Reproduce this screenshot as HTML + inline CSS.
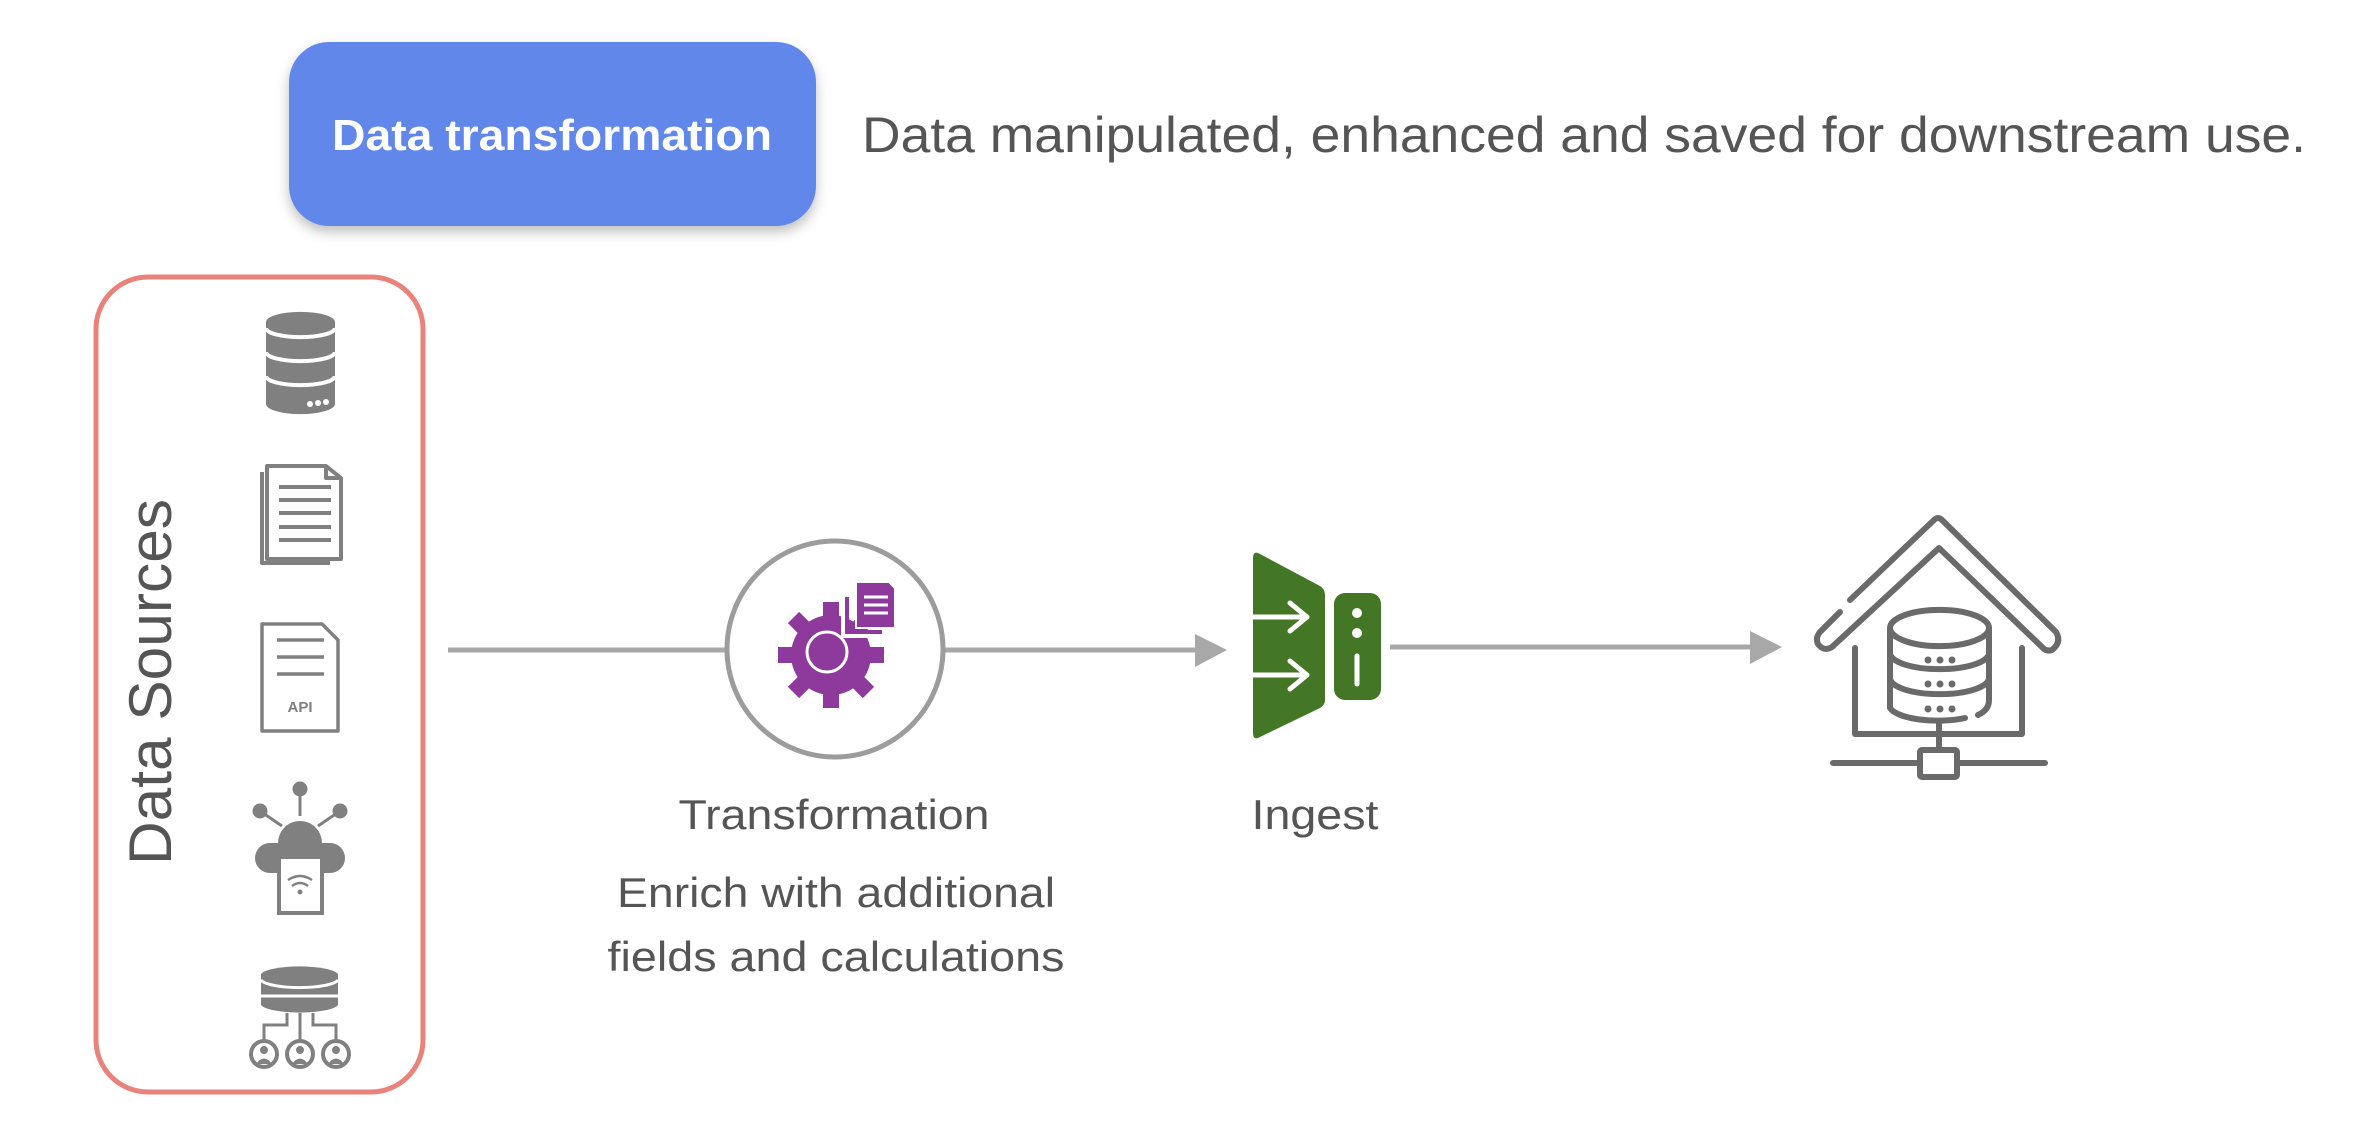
<!DOCTYPE html>
<html><head><meta charset="utf-8"><style>
html,body{margin:0;padding:0;background:#fff;width:2364px;height:1122px;overflow:hidden}
svg{display:block}
text{font-family:"Liberation Sans",Arial,sans-serif}
</style></head><body>
<svg width="2364" height="1122" viewBox="0 0 2364 1122" xmlns="http://www.w3.org/2000/svg">
<defs>
<filter id="sh" x="-10%" y="-10%" width="120%" height="130%"><feDropShadow dx="0" dy="6" stdDeviation="6" flood-color="#000" flood-opacity="0.25"/></filter>
</defs>
<rect x="289" y="42" width="527" height="184" rx="40" fill="#6287ea" filter="url(#sh)"/>
<text x="552" y="150" font-size="44" font-weight="bold" fill="#fff" text-anchor="middle" textLength="440" lengthAdjust="spacingAndGlyphs">Data transformation</text>
<text x="862" y="152" font-size="50" fill="#555" textLength="1444" lengthAdjust="spacingAndGlyphs">Data manipulated, enhanced and saved for downstream use.</text>

<rect x="96" y="277" width="327" height="815" rx="52" fill="none" stroke="#e8827a" stroke-width="5"/>
<text transform="translate(171,682) rotate(-90)" font-size="60" fill="#555" text-anchor="middle" textLength="366" lengthAdjust="spacingAndGlyphs">Data Sources</text>

<g fill="#808080">
<path d="M266 322 A34 10 0 0 1 335 322 L335 404 A34 10 0 0 1 266 404 Z"/>
</g>
<g fill="none" stroke="#fff" stroke-width="4">
<path d="M266 328 A34 9 0 0 0 335 328"/>
<path d="M266 352 A34 9 0 0 0 335 352"/>
<path d="M266 376 A34 9 0 0 0 335 376"/>
</g>
<g fill="#fff"><circle cx="310" cy="404" r="3"/><circle cx="318" cy="403" r="3"/><circle cx="326" cy="402" r="3"/></g>

<g fill="none" stroke="#808080" stroke-width="4" stroke-linejoin="round">
<path d="M262 472 L262 563 L330 563"/>
<path d="M267 466 L267 559 L341 559 L341 478 L326 466 Z"/>
<path d="M326 466 L326 478 L341 478"/>
</g>
<g stroke="#808080" stroke-width="4"><line x1="279" y1="487" x2="331" y2="487"/><line x1="279" y1="500" x2="331" y2="500"/><line x1="279" y1="513" x2="331" y2="513"/><line x1="279" y1="527" x2="331" y2="527"/><line x1="279" y1="540" x2="331" y2="540"/></g>

<path d="M262 624 L262 731 L338 731 L338 640 L322 624 Z" fill="none" stroke="#808080" stroke-width="3.5" stroke-linejoin="round"/>
<g stroke="#808080" stroke-width="3.5"><line x1="277" y1="640" x2="324" y2="640"/><line x1="277" y1="657" x2="324" y2="657"/><line x1="277" y1="674" x2="324" y2="674"/></g>
<text x="300" y="712" font-size="15" font-weight="bold" fill="#808080" text-anchor="middle">API</text>

<g fill="#808080" stroke="#808080" stroke-width="3">
<circle cx="260" cy="811" r="6"/><circle cx="300" cy="789" r="6"/><circle cx="340" cy="811" r="6"/>
<line x1="260" y1="811" x2="282" y2="826"/><line x1="300" y1="789" x2="300" y2="816"/><line x1="340" y1="811" x2="318" y2="826"/>
</g>
<g fill="#808080">
<circle cx="300" cy="843" r="22"/><circle cx="270" cy="858" r="15"/><circle cx="330" cy="858" r="15"/><rect x="270" y="843" width="60" height="30"/>
</g>
<rect x="279" y="857" width="43" height="56" fill="#fff" stroke="#808080" stroke-width="4"/>
<g fill="none" stroke="#808080" stroke-width="2.5"><path d="M288 880 Q300 872 312 880"/><path d="M292 886 Q300 880 308 886"/></g>
<circle cx="300" cy="892" r="2.5" fill="#808080"/>

<path d="M261 974 A39 9 0 0 1 338 974 L338 1005 A39 9 0 0 1 261 1005 Z" fill="#808080"/>
<path d="M261 980 A39 9 0 0 0 338 980" fill="none" stroke="#fff" stroke-width="3"/>
<path d="M261 996 L338 996" stroke="#fff" stroke-width="3"/>
<g fill="none" stroke="#808080" stroke-width="3"><path d="M300 1013 L300 1040"/><path d="M287 1013 L287 1025 L264 1025 L264 1040"/><path d="M313 1013 L313 1025 L336 1025 L336 1040"/></g>
<g fill="#fff" stroke="#808080" stroke-width="4"><circle cx="264" cy="1054" r="13"/><circle cx="300" cy="1054" r="13"/><circle cx="336" cy="1054" r="13"/></g>
<g fill="#808080"><circle cx="264" cy="1050" r="4"/><circle cx="300" cy="1050" r="4"/><circle cx="336" cy="1050" r="4"/><path d="M256 1064 Q264 1053 272 1064Z"/><path d="M292 1064 Q300 1053 308 1064Z"/><path d="M328 1064 Q336 1053 344 1064Z"/></g>

<g stroke="#a8a8a8" stroke-width="5">
<line x1="448" y1="650" x2="728" y2="650"/>
<line x1="944" y1="650" x2="1198" y2="650"/>
<line x1="1390" y1="647" x2="1752" y2="647"/>
</g>
<path d="M1195 634 L1227 650 L1195 667 Z" fill="#a8a8a8"/>
<path d="M1750 631 L1782 647 L1750 664 Z" fill="#a8a8a8"/>

<ellipse cx="835" cy="649" rx="108" ry="108" fill="#fff" stroke="#9c9c9c" stroke-width="5"/>
<g fill="#8e3a9d" transform="translate(831,655)">
<circle r="40"/>
<g><rect x="-8" y="-53" width="16" height="18"/><rect x="-8" y="-53" width="16" height="18" transform="rotate(45)"/><rect x="-8" y="-53" width="16" height="18" transform="rotate(90)"/><rect x="-8" y="-53" width="16" height="18" transform="rotate(135)"/><rect x="-8" y="-53" width="16" height="18" transform="rotate(180)"/><rect x="-8" y="-53" width="16" height="18" transform="rotate(225)"/><rect x="-8" y="-53" width="16" height="18" transform="rotate(270)"/><rect x="-8" y="-53" width="16" height="18" transform="rotate(315)"/></g>
</g>
<circle cx="827" cy="652" r="20" fill="#8e3a9d" stroke="#fff" stroke-width="3"/>
<path d="M845 595 L845 634 L884 634" fill="none" stroke="#fff" stroke-width="8"/>
<path d="M847 597 L847 632 L882 632" fill="none" stroke="#8e3a9d" stroke-width="4"/>
<path d="M856 582 L889 582 L895 588 L895 628 L856 628 Z" fill="#8e3a9d" stroke="#fff" stroke-width="2"/>
<g stroke="#fff" stroke-width="3"><line x1="864" y1="597" x2="888" y2="597"/><line x1="864" y1="605" x2="888" y2="605"/><line x1="864" y1="613" x2="888" y2="613"/></g>

<path d="M1253 558 Q1253 550 1260 554 L1320 586 Q1325 589 1325 595 L1325 700 Q1325 705 1320 708 L1260 737 Q1253 741 1253 733 Z" fill="#437725"/>
<rect x="1334" y="593" width="47" height="107" rx="11" fill="#437725"/>
<circle cx="1357" cy="613" r="5" fill="#fff"/><circle cx="1357" cy="633" r="5" fill="#fff"/>
<line x1="1357" y1="656" x2="1357" y2="684" stroke="#fff" stroke-width="5" stroke-linecap="round"/>
<g fill="none" stroke="#fff" stroke-width="5" stroke-linecap="round" stroke-linejoin="round">
<path d="M1253 617 L1307 617 M1290 603 L1307 617 L1290 631"/>
<path d="M1253 675 L1307 675 M1290 661 L1307 675 L1290 689"/>
</g>

<g transform="translate(1800,500)" fill="none" stroke="#6a6a6a" stroke-width="6" stroke-linecap="round" stroke-linejoin="round">
<path d="M50 100 L134 20 Q138 16 142 20 L256 132 Q262 142 252 150 Q246 152 242 147 L139 48 L32 147 Q24 152 18 144 Q15 138 20 132 L40 112"/>
<path d="M55 148 L55 234 L222 234 L222 148"/>
<path d="M90 128 A49 18 0 0 1 189 128 A49 18 0 0 1 90 128 Z"/>
<path d="M90 128 L90 208 A49 16 0 0 0 165 218"/>
<path d="M189 128 L189 200 Q189 210 178 215"/>
<path d="M90 153 A49 16 0 0 0 189 153"/>
<path d="M90 178 A49 16 0 0 0 189 178"/>
<path d="M139 223 L139 250"/>
<rect x="120" y="250" width="37" height="27" rx="2"/>
<path d="M33 263 L120 263 M157 263 L245 263"/>
</g>
<g fill="#6a6a6a">
<circle cx="1928" cy="660" r="3.5"/><circle cx="1940" cy="660" r="3.5"/><circle cx="1952" cy="660" r="3.5"/>
<circle cx="1928" cy="684" r="3.5"/><circle cx="1940" cy="684" r="3.5"/><circle cx="1952" cy="684" r="3.5"/>
<circle cx="1928" cy="709" r="3.5"/><circle cx="1940" cy="709" r="3.5"/><circle cx="1952" cy="709" r="3.5"/>
</g>

<g fill="#555" font-size="42" text-anchor="middle">
<text x="834" y="829" textLength="311" lengthAdjust="spacingAndGlyphs">Transformation</text>
<text x="1315" y="829" textLength="127" lengthAdjust="spacingAndGlyphs">Ingest</text>
<text x="836" y="907" textLength="438" lengthAdjust="spacingAndGlyphs">Enrich with additional</text>
<text x="836" y="971" textLength="457" lengthAdjust="spacingAndGlyphs">fields and calculations</text>
</g>
</svg>
</body></html>
